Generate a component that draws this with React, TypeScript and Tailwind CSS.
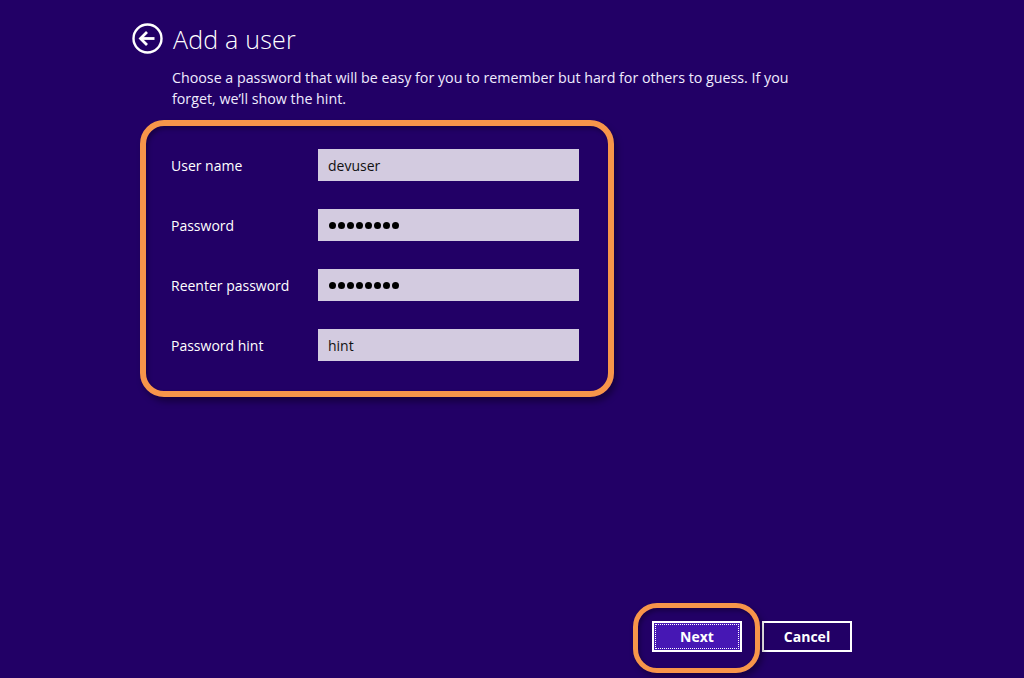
const fields = [
  { label: 'User name', value: 'devuser', secret: false },
  { label: 'Password', value: '', secret: true },
  { label: 'Reenter password', value: '', secret: true },
  { label: 'Password hint', value: 'hint', secret: false },
];

function BackIcon() {
  return (
    <svg width="31" height="31" viewBox="0 0 31 31" fill="none">
      <circle cx="15.5" cy="15.5" r="14" stroke="white" strokeWidth="2.4" />
      <path d="M8.5 15.5h14" stroke="white" strokeWidth="2.8" />
      <path d="M15 9l-6.5 6.5L15 22" stroke="white" strokeWidth="2.8" />
    </svg>
  );
}

function Dots() {
  return (
    <span className="flex gap-[2px] ml-[1px]">
      {Array.from({ length: 8 }).map((_, i) => (
        <span key={i} className="w-[7px] h-[7px] rounded-full bg-black" />
      ))}
    </span>
  );
}

export default function App() {
  return (
    <div
      className="w-[1024px] h-[678px] bg-[#220066] text-white flex flex-col overflow-hidden relative"
      style={{ fontFamily: '"Open Sans", "Noto Sans", sans-serif' }}
    >
      {/* Header */}
      <div className="flex items-center gap-[10px] pl-[132px] pt-[23px]">
        <BackIcon />
        <h1 className="text-[25px] font-light leading-[30px] tracking-[0.2px]">Add a user</h1>
      </div>

      <p className="ml-[172px] mt-[13px] w-[650px] text-[14.25px] leading-[21px] text-[#f0ecff]">
        Choose a password that will be easy for you to remember but hard for others to guess. If you
        forget, we’ll show the hint.
      </p>

      {/* Form */}
      <div className="ml-[140px] mt-[11px] w-[474px] h-[277px] border-[6px] border-[#f7954a] rounded-[24px] shadow-[3px_5px_6px_rgba(0,0,0,0.35),inset_2px_3px_4px_rgba(0,0,0,0.3)] pl-[25px] pt-[23px] flex flex-col gap-[28px]">
        {fields.map((f) => (
          <div key={f.label} className="flex items-center h-[32px]">
            <span className="w-[147px] text-[14px]">{f.label}</span>
            <div className="w-[261px] h-[32px] bg-[#d3cbe0] flex items-center pl-[10px] text-[#111] text-[14px]">
              {f.secret ? <Dots /> : f.value}
            </div>
          </div>
        ))}
      </div>

      {/* Buttons */}
      <div className="mt-auto mb-[26px] ml-[652px] flex gap-[20px]">
        <button className="w-[90px] h-[31px] border-2 border-white bg-[#4617b4] p-[1px]">
          <span className="w-full h-full flex items-center justify-center border border-dotted border-white text-[14px] font-bold">
            Next
          </span>
        </button>
        <button className="w-[90px] h-[31px] border-2 border-white flex items-center justify-center text-[14px] font-bold">
          Cancel
        </button>
      </div>

      {/* highlight ring around Next */}
      <div className="absolute left-[633px] top-[603px] w-[127px] h-[70px] border-[5px] border-[#f7954a] rounded-[24px] shadow-[3px_4px_6px_rgba(0,0,0,0.35),inset_2px_3px_4px_rgba(0,0,0,0.3)] pointer-events-none" />
    </div>
  );
}
